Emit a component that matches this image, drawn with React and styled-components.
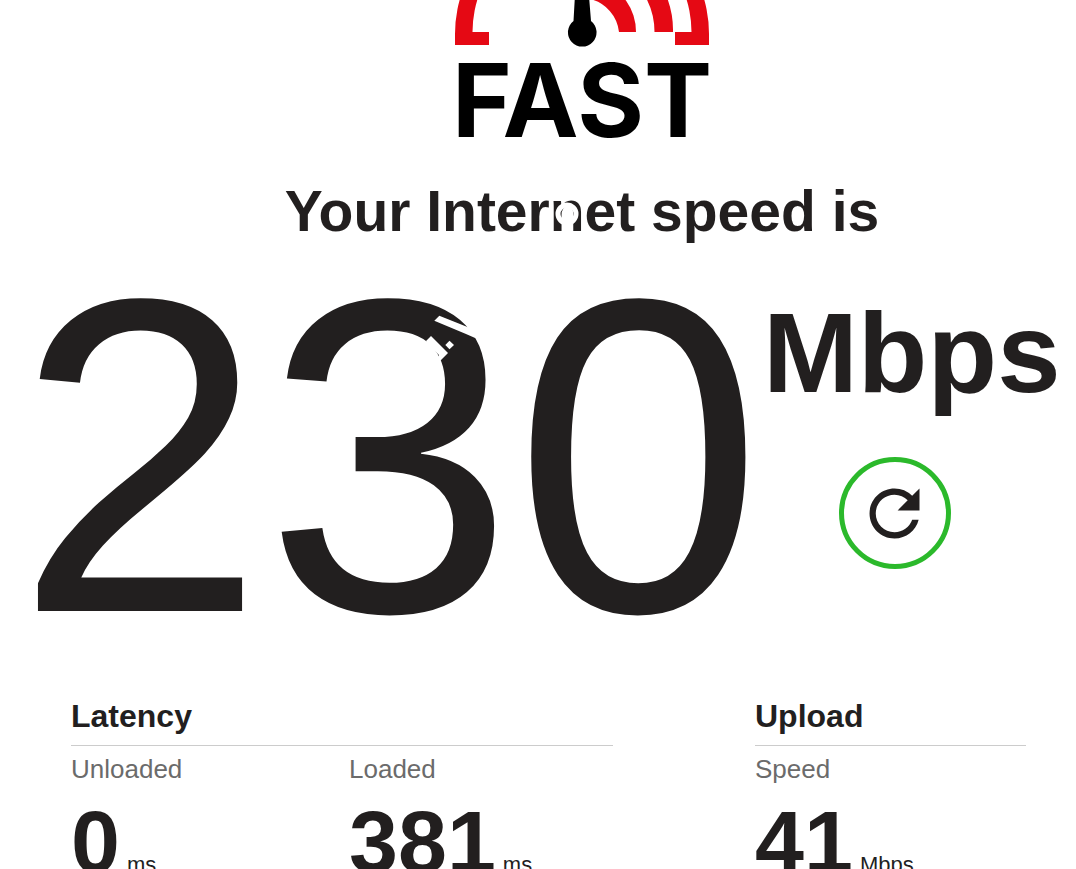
import React from "react";
import styled, { createGlobalStyle } from "styled-components";
import { MdRefresh } from "react-icons/md";

const GlobalStyle = createGlobalStyle`
  * {
    box-sizing: border-box;
  }
  body {
    margin: 0;
    background: #fff;
    color: #221f1f;
    font-family: Arial, "Liberation Sans", sans-serif;
    overflow: hidden;
  }
`;

// Header

const Header = styled.header`
  display: flex;
  flex-direction: column;
  align-items: center;
  padding-left: 88px;
`;

const Logo = styled.a`
  display: flex;
  flex-direction: column;
  align-items: center;
  color: #000;
  text-decoration: none;
`;

const Gauge = styled.svg`
  display: block;
  width: 254px;
  height: 47px;
`;

const LogoName = styled.span`
  font-family: Inter, sans-serif;
  font-weight: 700;
  font-size: 102px;
  line-height: 106px;
`;

const Title = styled.h1`
  position: relative;
  margin: 26px 0 0;
  font-size: 57px;
  line-height: 64px;
  font-weight: 700;
  white-space: nowrap;
`;

const RingMark = styled.svg`
  position: absolute;
  top: 20px;
  left: 268px;
  width: 28px;
  height: 30px;
`;

// Speed

const Speed = styled.section`
  display: flex;
  justify-content: center;
  margin-top: 26px;
`;

const SpeedValue = styled.div`
  position: relative;
  font-size: 448px;
  line-height: 374px;
`;

const SparkMark = styled.svg`
  position: absolute;
  top: 45px;
  left: 407px;
  width: 60px;
  height: 52px;
`;

const SpeedSide = styled.div`
  padding-top: 20px;
`;

const SpeedUnit = styled.div`
  font-size: 114px;
  line-height: 128px;
  font-weight: 700;
`;

const RefreshButton = styled.button`
  display: flex;
  align-items: center;
  justify-content: center;
  width: 112px;
  height: 112px;
  margin: 40px 0 0 76px;
  padding: 0;
  border: 5px solid #2bb92b;
  border-radius: 50%;
  background: #fff;
  color: #221f1f;
  cursor: pointer;
`;

// Details

const Details = styled.section`
  display: grid;
  grid-template-columns: 2fr 1fr;
  column-gap: 142px;
  margin-top: 55px;
  padding: 0 50px 0 71px;
`;

const DetailTitle = styled.h2`
  margin: 0;
  padding-bottom: 11px;
  border-bottom: 1px solid #ccc;
  font-size: 32px;
  line-height: 36px;
`;

const Metrics = styled.div`
  display: grid;
  grid-template-columns: repeat(${(props) => props.$columns}, 1fr);
  column-gap: 14px;
  margin-top: 8px;
`;

const Label = styled.div`
  color: #6b6b6b;
  font-size: 26px;
  line-height: 30px;
`;

const Reading = styled.div`
  display: flex;
  align-items: baseline;
  gap: 7px;
  margin-top: 10px;
`;

const Value = styled.span`
  font-size: 88px;
  line-height: 96px;
  font-weight: 700;
`;

const Unit = styled.span`
  font-size: 22px;
`;

const Metric = ({ label, value, unit }) => (
  <div>
    <Label>{label}</Label>
    <Reading>
      <Value>{value}</Value>
      <Unit>{unit}</Unit>
    </Reading>
  </div>
);

function App() {
  return (
    <>
      <GlobalStyle />
      <Header>
        <Logo href="#">
          <Gauge viewBox="455 0 254 47" aria-hidden="true">
            <g fill="#e50914">
              <path d="M455 45V34A127 127 0 0 1 709 34V45H675V32H691.5A109.5 109.5 0 0 0 472.5 32H489V45Z" />
              <path d="M673 32A91 91 0 0 0 640 -40L620 -30A73 73 0 0 1 654.5 32Z" />
              <path d="M636 32A54 54 0 0 0 600 -19L590 -1A38 38 0 0 1 619 32Z" />
            </g>
            <path d="M574.7 0L573.5 21A14.3 14.3 0 1 0 591 21L589.3 0Z" />
          </Gauge>
          <LogoName>FAST</LogoName>
        </Logo>
        <Title>
          Your Internet speed is
          <RingMark viewBox="0 0 28 30" aria-hidden="true">
            <circle cx="14" cy="15" r="9" fill="none" stroke="#fff" strokeWidth="5" />
          </RingMark>
        </Title>
      </Header>

      <Speed>
        <SpeedValue>
          230
          <SparkMark viewBox="420 314 60 52" fill="#fff" aria-hidden="true">
            <path d="M432.3 320.7L437.3 315.7L468 328L480 341L464 334Z" />
            <path d="M447.5 340.7L452 345L447.5 349.3L443.3 345Z" />
            <path
              fillRule="evenodd"
              d="M424 341L429 336L446 353L437 362L430 355ZM431 349L437 355L436 360Z"
            />
          </SparkMark>
        </SpeedValue>
        <SpeedSide>
          <SpeedUnit>Mbps</SpeedUnit>
          <RefreshButton aria-label="Test again">
            <MdRefresh size={75} />
          </RefreshButton>
        </SpeedSide>
      </Speed>

      <Details>
        <div>
          <DetailTitle>Latency</DetailTitle>
          <Metrics $columns={2}>
            <Metric label="Unloaded" value="0" unit="ms" />
            <Metric label="Loaded" value="381" unit="ms" />
          </Metrics>
        </div>
        <div>
          <DetailTitle>Upload</DetailTitle>
          <Metrics $columns={1}>
            <Metric label="Speed" value="41" unit="Mbps" />
          </Metrics>
        </div>
      </Details>
    </>
  );
}

export default App;
